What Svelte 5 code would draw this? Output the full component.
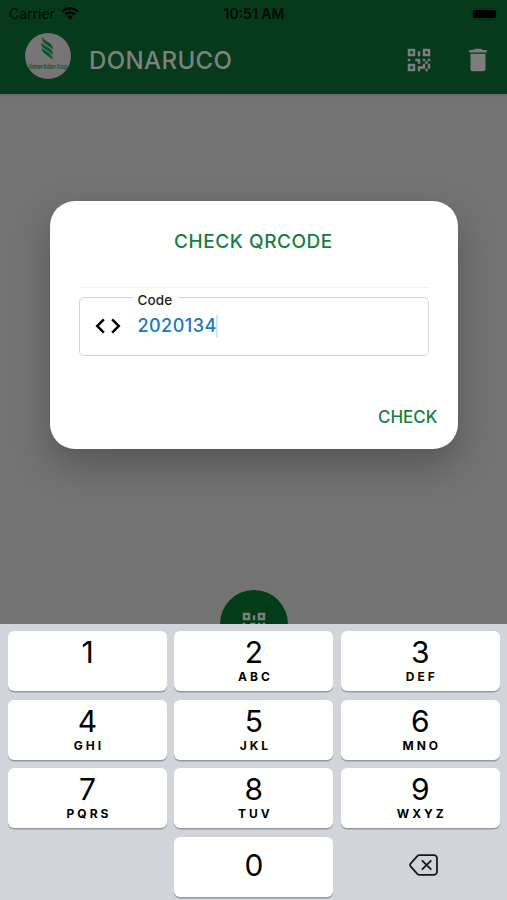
<script lang="ts">
type Key = { digit: string; letters: string };

const keys: Key[] = [
  { digit: '1', letters: '' },
  { digit: '2', letters: 'ABC' },
  { digit: '3', letters: 'DEF' },
  { digit: '4', letters: 'GHI' },
  { digit: '5', letters: 'JKL' },
  { digit: '6', letters: 'MNO' },
  { digit: '7', letters: 'PQRS' },
  { digit: '8', letters: 'TUV' },
  { digit: '9', letters: 'WXYZ' }
];

const qrPath =
  'M3,11H5V13H3V11M11,5H13V9H11V5M9,11H13V15H11V13H9V11M15,11H17V13H19V11H21V13H19V15H21V19H19V21H17V19H13V21H11V17H15V15H17V13H15V11M19,19V15H17V19H19M15,3H21V9H15V3M17,5V7H19V5H17M3,3H9V9H3V3M5,5V7H7V5H5M3,15H9V21H3V15M5,17V19H7V17H5Z';

let code = $state('2020134');

function press(digit: string) {
  code += digit;
}

function erase() {
  code = code.slice(0, -1);
}
</script>

<div class="screen">
  <header>
    <div class="status">
      <div class="carrier">
        <span>Carrier</span>
        <svg class="wifi" viewBox="0 0 18 13">
          <path d="M9 .2C5.6.2 2.6 1.5.3 3.7L2 5.4C3.9 3.6 6.3 2.6 9 2.6s5.1 1 7 2.8l1.7-1.7C15.4 1.5 12.4.2 9 .2Z" />
          <path d="M9 4.3c-2.2 0-4.2.9-5.7 2.3L5 8.3C6.1 7.3 7.5 6.7 9 6.7s2.9.6 4 1.6l1.7-1.7C13.2 5.2 11.2 4.3 9 4.3Z" />
          <path d="M9 8.4c-1.1 0-2.1.4-2.8 1.1L9 12.5l2.8-3C11.1 8.8 10.1 8.4 9 8.4Z" />
        </svg>
      </div>
      <span class="time">10:51 AM</span>
      <div class="battery"><span></span></div>
    </div>
    <div class="toolbar">
      <svg class="logo" viewBox="0 0 46 46">
        <circle cx="23" cy="23" r="23" fill="#777575" />
        <g fill="#07552b">
          <path d="M17 3.5C18 8 28.5 9 28 16.8C25 12.500 16 11.500 17 3.500Z" />
          <path d="M16.300 8.500C17.500 13.500 28.500 14 28 22C24.800 17.500 15 16.500 16.300 8.500Z" />
          <path d="M16.800 14C18 18.500 28.300 19 27.500 27C24.600 22 15.800 21.500 16.800 14Z" />
        </g>
        <text transform="translate(23 35.5) scale(1 1.8)" text-anchor="middle">Vietnam Rubber Group</text>
      </svg>
      <h1>DONARUCO</h1>
      <svg class="icon" viewBox="0 0 24 24"><path d={qrPath} /></svg>
      <svg class="icon" viewBox="0 0 24 24">
        <path d="M19,4H15.5L14.5,3H9.5L8.5,4H5V6H19M6,19A2,2 0 0,0 8,21H16A2,2 0 0,0 18,19V7H6V19Z" />
      </svg>
    </div>
  </header>

  <main>
    <section class="dialog">
      <h2>CHECK QRCODE</h2>
      <div class="field">
        <span class="label">Code</span>
        <svg class="tags" viewBox="0 0 24 24">
          <path d="M14.6,16.6L19.2,12L14.6,7.4L16,6L22,12L16,18L14.6,16.6M9.4,16.6L4.8,12L9.4,7.4L8,6L2,12L8,18L9.4,16.6Z" />
        </svg>
        <span class="value">{code}</span>
        <span class="caret"></span>
      </div>
      <button class="check">CHECK</button>
    </section>
    <div class="fab">
      <svg class="icon" viewBox="0 0 24 24"><path d={qrPath} /></svg>
    </div>
  </main>

  <div class="keyboard">
    {#each keys as key}
      <button class="key" onclick={() => press(key.digit)}>
        <span class="digit">{key.digit}</span>
        <span class="letters">{key.letters}</span>
      </button>
    {/each}
    <span></span>
    <button class="key zero" onclick={() => press('0')}>
      <span class="digit">0</span>
    </button>
    <button class="erase" aria-label="Delete" onclick={erase}>
      <svg viewBox="0 0 30 22">
        <path d="M10.5 1.2H25a3 3 0 0 1 3 3V17.8a3 3 0 0 1-3 3H10.5a3 3 0 0 1-2.2-.9L1.8 12.6a2.2 2.2 0 0 1 0-3.2L8.3 2.1a3 3 0 0 1 2.2-.9ZM13.4 6.8l8.4 8.4M21.8 6.8l-8.4 8.4" />
      </svg>
    </button>
  </div>
</div>

<style>
:global(body) {
  margin: 0;
}

.screen {
  display: flex;
  flex-direction: column;
  width: 507px;
  height: 900px;
  overflow: hidden;
  background: #737373;
  font-family: Inter, 'Liberation Sans', sans-serif;
}

button {
  border: 0;
  padding: 0;
  background: none;
  font-family: inherit;
}

header {
  height: 94px;
  flex: none;
  background: #053a1b;
  box-shadow: 0 1px 2px rgba(0, 0, 0, 0.15);
}

.status {
  display: grid;
  grid-template-columns: 1fr auto 1fr;
  align-items: center;
  height: 27px;
  padding: 0 9px;
  color: #010a05;
  font-size: 14px;
}

.carrier {
  display: flex;
  align-items: center;
  gap: 6px;
}

.wifi {
  width: 18px;
  height: 13px;
}

.time {
  padding-left: 1px;
  font-size: 14px;
  font-weight: 600;
}

.battery {
  justify-self: end;
  padding: 1px;
  border: 1px solid #04301a;
  border-radius: 4px;
}

.battery span {
  display: block;
  width: 23px;
  height: 8px;
  border-radius: 2px;
  background: #000;
}

.toolbar {
  display: flex;
  align-items: center;
  height: 65px;
  padding: 0 14px 0 25px;
}

.logo {
  width: 46px;
  height: 46px;
  margin-top: -7px;
}

.logo text {
  font-size: 3.5px;
  font-weight: 600;
  fill: #144a2e;
}

h1 {
  flex: 1;
  margin: 1px 0 0 18px;
  color: #7e817f;
  font-size: 24px;
  font-weight: 500;
  letter-spacing: 0.4px;
}

.icon {
  width: 30px;
  height: 30px;
  fill: #7d7d7d;
}

.toolbar .icon + .icon {
  margin-left: 29px;
}

main {
  display: flex;
  flex-direction: column;
  align-items: center;
  height: 530px;
  flex: none;
}

.dialog {
  display: flex;
  flex-direction: column;
  box-sizing: border-box;
  width: 408px;
  height: 248px;
  flex: none;
  margin-top: 106.5px;
  padding: 0 29px;
  border-radius: 25px;
  background: #fff;
  box-shadow: 0 16px 36px rgba(0, 0, 0, 0.25);
}

h2 {
  height: 86px;
  margin: 0 0 9px;
  border-bottom: 1px solid #f3f3f3;
  color: #14803f;
  font-size: 19px;
  font-weight: 500;
  line-height: 82px;
  letter-spacing: 0.55px;
  text-align: center;
}

.field {
  position: relative;
  display: flex;
  align-items: center;
  box-sizing: border-box;
  height: 59px;
  padding-left: 13px;
  border: 1.5px solid #d2d5d6;
  border-radius: 5px;
}

.label {
  position: absolute;
  top: -6px;
  left: 53px;
  padding: 0 6px 0 5px;
  background: #fff;
  color: #1c1c1c;
  font-size: 13.5px;
  font-weight: 500;
  line-height: 17px;
  letter-spacing: 0.15px;
}

.tags {
  width: 30px;
  height: 30px;
}

.value {
  margin: -2px 0 0 15px;
  color: #1878c4;
  font-size: 18px;
  font-weight: 500;
  letter-spacing: 0.45px;
}

.caret {
  width: 2px;
  height: 23px;
  margin-left: -1px;
  background: #d5e6f5;
}

.check {
  align-self: flex-end;
  margin: 49px -9px 0 0;
  color: #14803f;
  font-size: 17px;
  font-weight: 500;
  line-height: 24px;
}

.fab {
  display: flex;
  align-items: center;
  justify-content: center;
  width: 68px;
  height: 68px;
  flex: none;
  margin-top: 141.5px;
  border-radius: 50%;
  background: #033d18;
}

.keyboard {
  position: relative;
  display: grid;
  grid-template-columns: repeat(3, 159px);
  grid-auto-rows: 60px;
  gap: 8.5px 7.4px;
  box-sizing: border-box;
  height: 276px;
  padding: 7px 8px;
  background: #d1d4da;
}

.key {
  display: flex;
  flex-direction: column;
  align-items: center;
  border-radius: 6px;
  background: #fff;
  box-shadow: 0 1.5px 0 #96999d;
  color: #000;
}

.digit {
  padding-top: 3px;
  font-size: 30px;
  font-weight: 400;
  line-height: 36px;
}

.zero .digit {
  padding-top: 10px;
}

.letters {
  height: 14px;
  font-size: 12px;
  font-weight: 700;
  line-height: 14px;
  letter-spacing: 3px;
  text-indent: 3px;
}

.erase {
  display: flex;
  align-items: center;
  justify-content: center;
}

.erase svg {
  width: 30px;
  height: 22px;
  margin-top: -4px;
  margin-left: 7px;
  fill: none;
  stroke: #15191d;
  stroke-width: 1.8;
  stroke-linecap: round;
}
</style>
